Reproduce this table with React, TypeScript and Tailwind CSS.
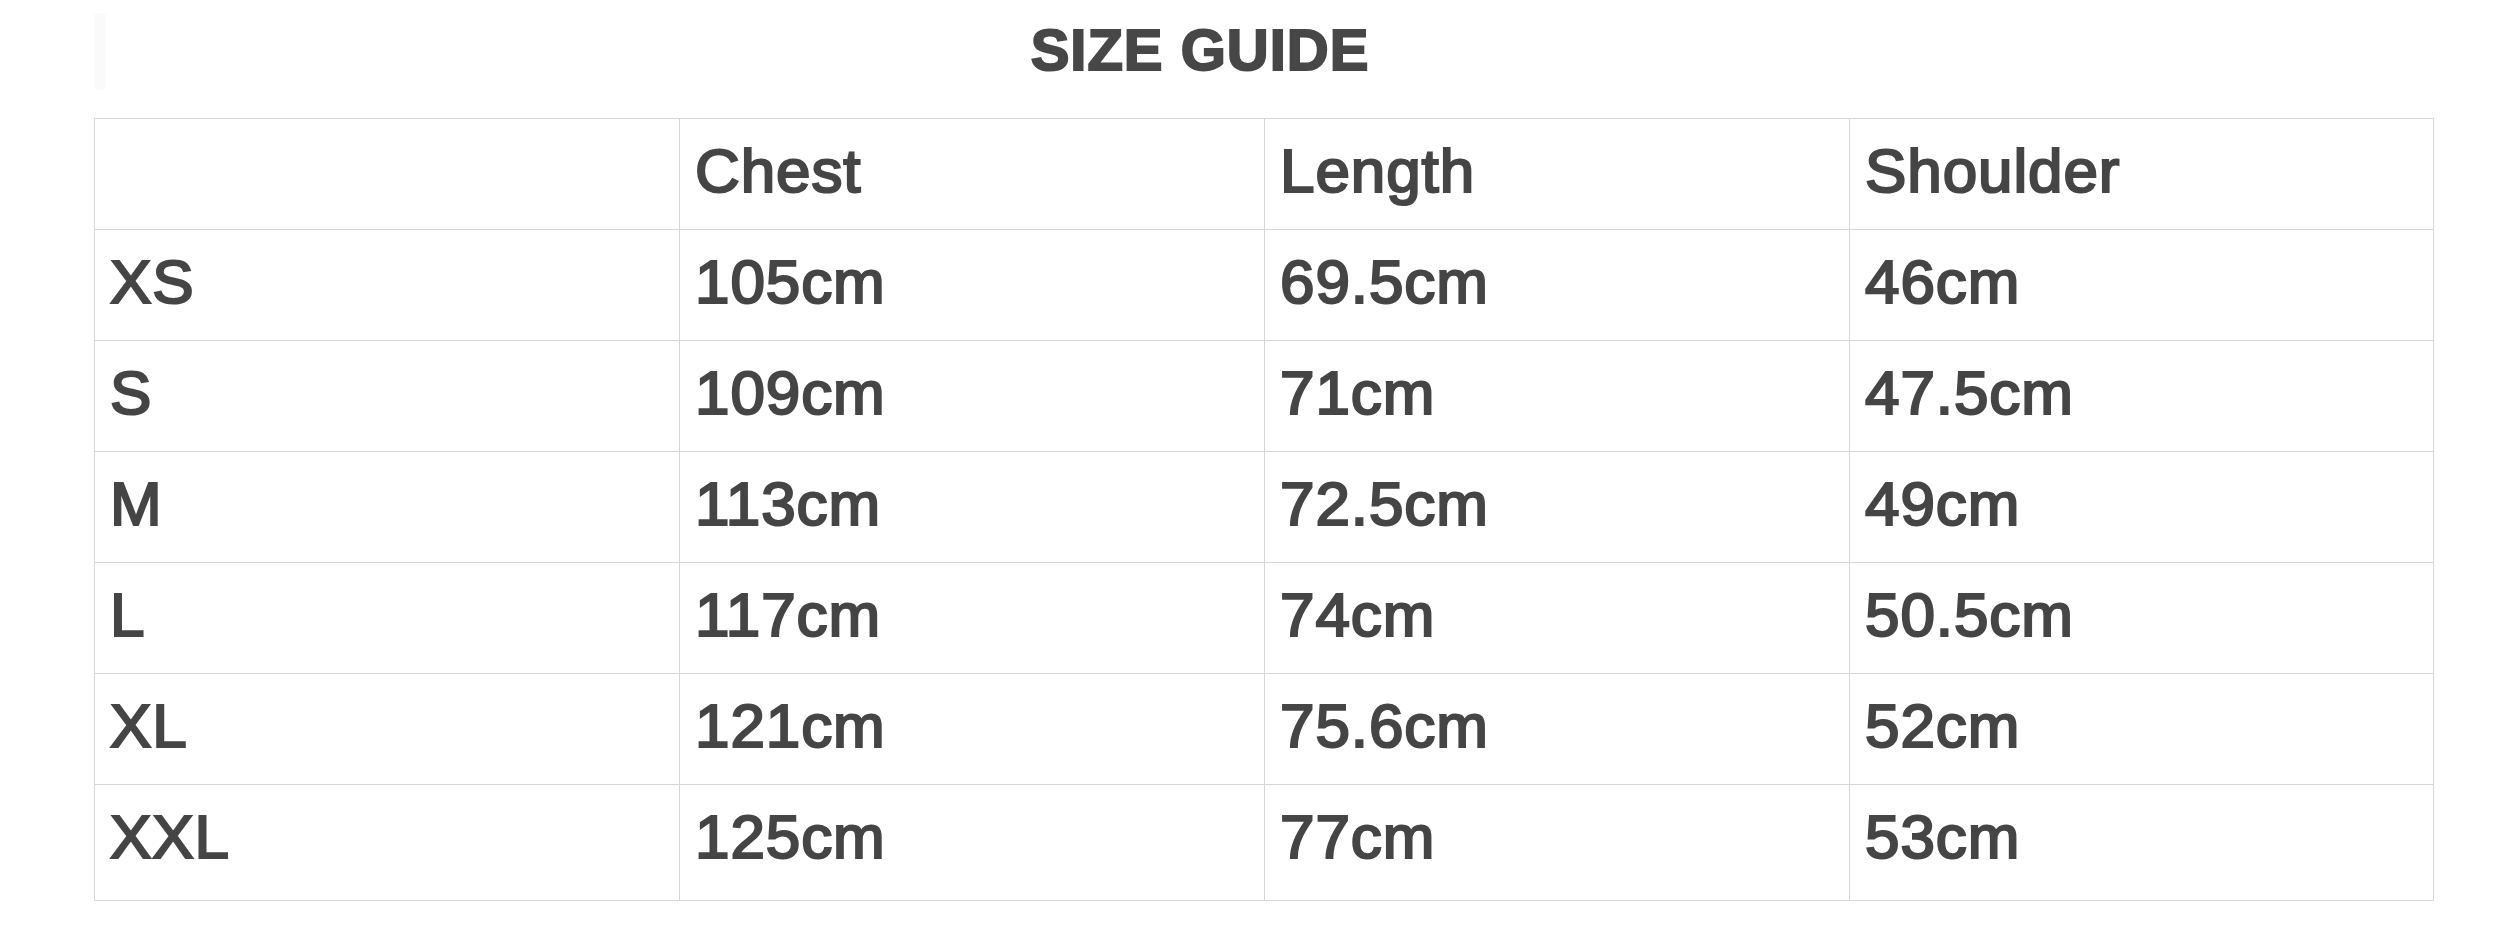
import React from "react";

const rows: string[][] = [
  ["", "Chest", "Length", "Shoulder"],
  ["XS", "105cm", "69.5cm", "46cm"],
  ["S", "109cm", "71cm", "47.5cm"],
  ["M", "113cm", "72.5cm", "49cm"],
  ["L", "117cm", "74cm", "50.5cm"],
  ["XL", "121cm", "75.6cm", "52cm"],
  ["XXL", "125cm", "77cm", "53cm"],
];

export default function App() {
  return (
    <div
      className="w-[2519px] h-[932px] bg-white text-[#454545] overflow-hidden"
      style={{ fontFamily: '"Liberation Sans", Arial, sans-serif' }}
    >
      <div className="ml-[94px] w-[2340px] h-[118px] flex">
        <div className="w-[12px] h-[77px] mt-[13px] bg-[#fafafa] rounded-sm" />
        <div className="flex-1 flex justify-center pt-[21px] mr-[140px]">
          <h1 className="text-[58px] leading-[58px] font-bold tracking-[1px] text-[#474747] [-webkit-text-stroke:2px_#474747]">
            SIZE GUIDE
          </h1>
        </div>
      </div>
      <div className="ml-[94px] w-[2340px] border-l border-t border-[#d6d6d6] grid grid-cols-[585px_585px_585px_584px]">
        {rows.map((row, ri) =>
          row.map((cell, ci) => (
            <div
              key={`${ri}-${ci}`}
              className={`border-r border-b border-[#d6d6d6] pl-[15px] pt-[21px] text-[62px] leading-[62px] tracking-[0.9px] [-webkit-text-stroke:2.2px_#454545] ${
                ri === rows.length - 1 ? "h-[116px]" : "h-[111px]"
              }`}
            >
              {cell}
            </div>
          ))
        )}
      </div>
    </div>
  );
}
